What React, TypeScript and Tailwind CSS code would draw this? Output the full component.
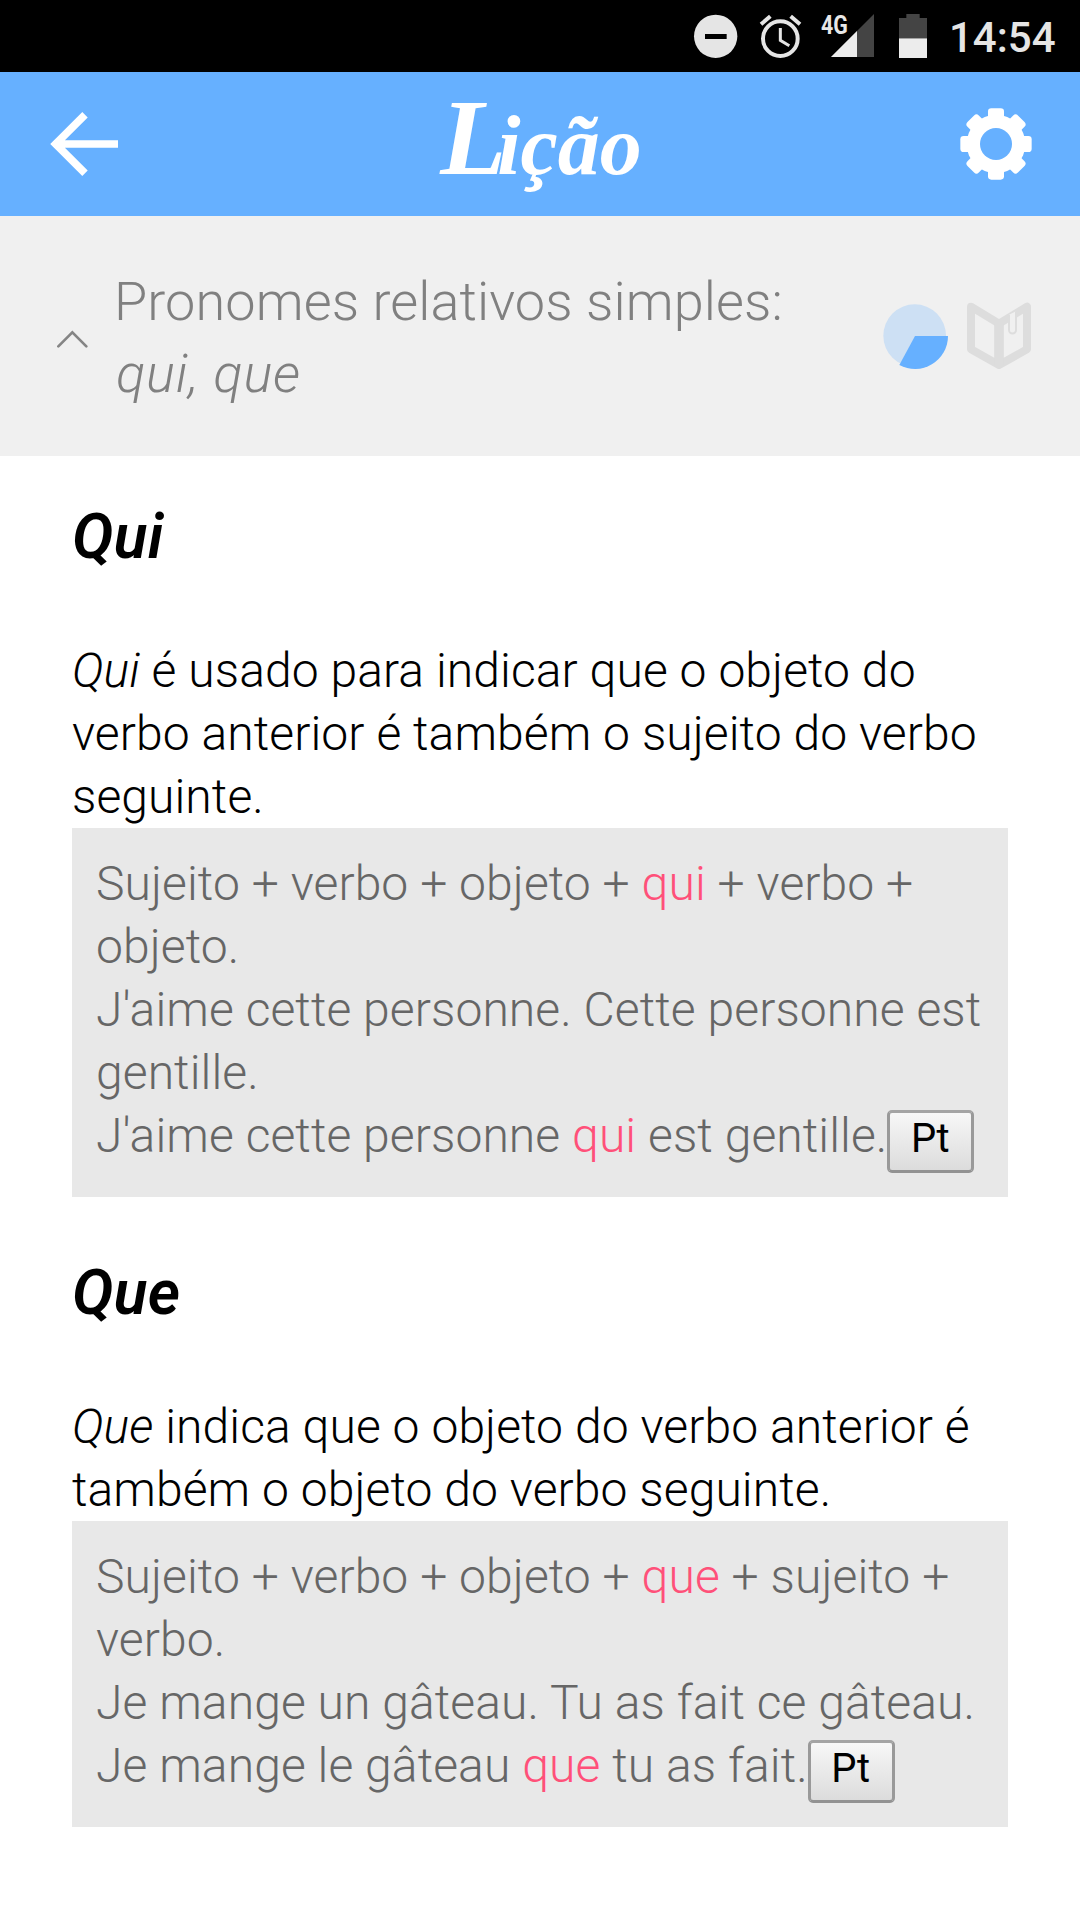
import type { ReactNode } from "react";

function StatusBar() {
  return (
    <div className="h-[72px] bg-black flex items-center pl-[690px]">
      <svg className="w-[50px] h-[72px] shrink-0" viewBox="90 0 150 216">
        <circle cx="167" cy="109" r="65" fill="#e5e5e5" />
        <rect x="135" y="102" width="65" height="15" fill="#000" />
      </svg>
      <svg className="w-[60px] h-[72px] shrink-0" viewBox="240 0 180 216" overflow="visible">
        <g fill="none" stroke="#e5e5e5">
          <circle cx="361" cy="116" r="52" strokeWidth="12" />
          <path d="M303 73 L331 49 M420 73 L392 49" strokeWidth="12" />
          <path d="M361 84 V121 L388 137" strokeWidth="9" />
        </g>
      </svg>
      <div className="relative w-[84px] h-[72px] shrink-0">
        <svg className="w-[84px] h-[72px]" viewBox="420 0 252 216">
          <path d="M642 42 V171 H513 Z" fill="#444" />
          <path d="M591 93 V171 H513 Z" fill="#ececec" />
        </svg>
        <span className="absolute left-[21px] top-[12px] text-[26px] leading-[26px] font-bold text-[#e8e8e8] origin-left scale-x-[0.82]">4G</span>
      </div>
      <svg className="w-[46px] h-[72px] shrink-0" viewBox="672 0 138 216">
        <path d="M717 54 H739 V42 H779 V54 H801 V115 H717 Z" fill="#444" />
        <rect x="717" y="115" width="84" height="59" fill="#ececec" />
      </svg>
      <span className="ml-[19px] mt-[3px] text-[42px] leading-[48px] font-medium text-[#e5e5e5] whitespace-nowrap">14:54</span>
    </div>
  );
}

function Header() {
  return (
    <header className="h-[144px] bg-[#66b0ff] flex items-center justify-between pl-[50px] pr-[48px] text-white">
      <svg className="w-[72px] h-[72px]" viewBox="150 114 216 216">
        <path d="M255 134 L167 222 L255 310 M167 222 H354" fill="none" stroke="#fff" strokeWidth="23" />
      </svg>
      <h1 className="h-[144px] text-[84px] leading-[132px] italic font-bold font-['Liberation_Serif',serif] whitespace-nowrap">
        <span className="text-[108px] -tracking-[9px]">L</span>ição
      </h1>
      <svg className="w-[72px] h-[72px]" viewBox="-108 -108 216 216">
        <g fill="#fff">
          {[0, 45, 90, 135].map((a) => (
            <rect key={a} x="-24" y="-107" width="48" height="214" rx="10" transform={`rotate(${a})`} />
          ))}
          <circle r="88" />
        </g>
        <circle r="48" fill="#66b0ff" />
      </svg>
    </header>
  );
}

function LessonBar() {
  return (
    <section className="h-[240px] bg-[#f0f0f0] flex items-center pl-[56px] pr-[48px] text-[#808080]">
      <svg className="w-[33px] h-[18px] mt-[5px]" viewBox="168 241 99 54">
        <path d="M175 290 L217 248 L259 290" fill="none" stroke="#858585" strokeWidth="8" strokeLinecap="round" />
      </svg>
      <h2 className="ml-[25px] mt-[3px] grow text-[54px] leading-[72px] font-light tracking-[0.1px] whitespace-nowrap">
        Pronomes relativos simples:
        <br />
        <i className="ml-[2px] tracking-[0.9px]">qui, que</i>
      </h2>
      <svg className="w-[66px] h-[66px]" viewBox="-99 -99 198 198">
        <circle r="94" cx="-1" cy="-1" fill="#cde0f4" />
        <path d="M0 0 H99 A99 99 0 0 1 -47 87 Z" fill="#66b0ff" />
      </svg>
      <svg className="w-[66px] h-[68px] ml-[18px] -mt-[1px]" viewBox="318 66 198 204">
        <path d="M333 80 L417 131 L501 80 V208 L417 255 L333 208 Z" fill="none" stroke="#ddd" strokeWidth="24" strokeLinejoin="round" />
        <path d="M417 131 V255" stroke="#ddd" strokeWidth="29" />
        <path d="M447 104 V150 A10 10 0 0 0 468 150 V94" fill="#f0f0f0" stroke="#ddd" strokeWidth="6" />
        <path d="M450 106 L465 97 V150 A8 8 0 0 1 450 150 Z" fill="#f0f0f0" />
      </svg>
    </section>
  );
}

function Pink({ children }: { children: ReactNode }) {
  return <span className="text-[#ff5079]">{children}</span>;
}

function TranslateButton() {
  return (
    <button className="inline-block align-baseline w-[87px] h-[63px] pl-0 pr-[1px] pt-[2px] pb-[8px] border-[3px] border-t-[#a4a4a4] border-x-[#999] border-b-[#929292] rounded-[5px] bg-linear-to-b from-[#f7f7f7] to-[#dcdcdc] text-black text-[40px] leading-[47px] font-normal">
      Pt
    </button>
  );
}

function Heading({ children }: { children: ReactNode }) {
  return <h3 className="text-[62px] leading-[72px] font-semibold italic tracking-[0.4px] text-black">{children}</h3>;
}

function Example({ children }: { children: ReactNode }) {
  return <div className="bg-[#e8e8e8] p-6 text-[#666] whitespace-nowrap">{children}</div>;
}

export default function App() {
  return (
    <div className="w-[1080px] h-[1920px] overflow-hidden bg-white font-['Roboto',sans-serif]">
      <StatusBar />
      <Header />
      <LessonBar />
      <main className="px-[72px] text-[48px] leading-[63px] font-light tracking-[0.085px] text-black">
        <div className="pt-[45px] pb-[66px]">
          <Heading>Qui</Heading>
        </div>
        <p className="whitespace-nowrap">
          <i>Qui</i> é usado para indicar que o objeto do
          <br />
          verbo anterior é também o sujeito do verbo
          <br />
          seguinte.
        </p>
        <Example>
          <p>
            Sujeito + verbo + objeto + <Pink>qui</Pink> + verbo +
            <br />
            objeto.
          </p>
          <p>
            J'aime cette personne. Cette personne est
            <br />
            gentille.
          </p>
          <p className="h-[69px]">
            J'aime cette personne <Pink>qui</Pink> est gentille.
            <TranslateButton />
          </p>
        </Example>
        <div className="pt-[60px] pb-[66px]">
          <Heading>Que</Heading>
        </div>
        <p className="whitespace-nowrap">
          <i>Que</i> indica que o objeto do verbo anterior é
          <br />
          também o objeto do verbo seguinte.
        </p>
        <Example>
          <p>
            Sujeito + verbo + objeto + <Pink>que</Pink> + sujeito +
            <br />
            verbo.
          </p>
          <p>Je mange un gâteau. Tu as fait ce gâteau.</p>
          <p className="h-[69px]">
            Je mange le gâteau <Pink>que</Pink> tu as fait.
            <TranslateButton />
          </p>
        </Example>
      </main>
    </div>
  );
}
